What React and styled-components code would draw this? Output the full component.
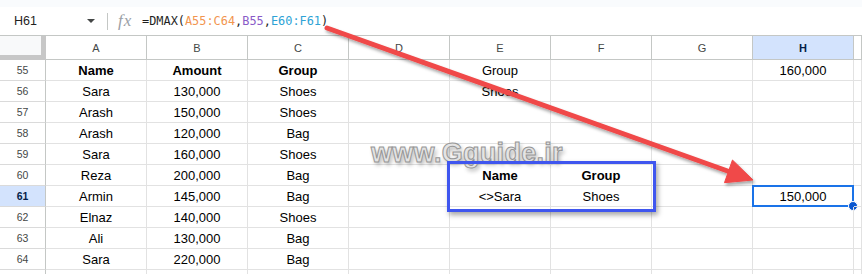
import React from 'react'
import styled, {createGlobalStyle} from 'styled-components'

const GlobalStyle = createGlobalStyle`
  html, body {
    margin: 0;
    padding: 0;
    background: #fff;
    overflow: hidden;
  }
  body {
    font-family: "Liberation Sans", Arial, sans-serif;
  }
`

const Page = styled.div`
  position: relative;
  width: 862px;
  height: 274px;
  overflow: hidden;
  background: #fff;
`

const TopBand = styled.div`
  height: 7px;
  background: #f9fbfd;
`

const FormulaBar = styled.div`
  display: flex;
  align-items: center;
  height: 28px;
  border-bottom: 1px solid #c4c7c5;
`

const NameBox = styled.div`
  display: flex;
  align-items: center;
  justify-content: space-between;
  box-sizing: border-box;
  width: 95px;
  padding-left: 14px;
  font-size: 12.5px;
  color: #1f1f1f;
`

const Caret = styled.span`
  width: 0;
  height: 0;
  border-left: 4px solid transparent;
  border-right: 4px solid transparent;
  border-top: 4px solid #444746;
`

const Divider = styled.span`
  width: 1px;
  height: 17px;
  margin-left: 12px;
  background: #c4c7c5;
`

const Fx = styled.span`
  width: 16px;
  margin-left: 10px;
  font-family: "Liberation Serif", serif;
  font-style: italic;
  font-size: 17px;
  letter-spacing: 1px;
  color: #9aa0a6;
`

const Formula = styled.div`
  margin-left: 8px;
  font-family: "DejaVu Sans Mono", "Liberation Mono", monospace;
  font-size: 11.9px;
  color: #1f1f1f;
`

const Ref = styled.span`
  color: ${p => p.$c};
`

const Sheet = styled.div`
  display: grid;
  grid-template-columns: 46px repeat(8, 101px) 1fr;
  grid-template-rows: 24px;
  grid-auto-rows: 21px;
`

const Corner = styled.div`
  box-sizing: border-box;
  background: #f8f9fa;
  border-right: 5px solid #c7c7c7;
  border-bottom: 5px solid #c7c7c7;
`

const ColHead = styled.div`
  box-sizing: border-box;
  display: flex;
  align-items: center;
  justify-content: center;
  border-right: 1px solid #c4c7c5;
  border-bottom: 1px solid #c4c7c5;
  background: ${p => (p.$active ? '#d3e3fd' : '#fff')};
  color: ${p => (p.$active ? '#041e49' : '#444746')};
  font-weight: ${p => (p.$active ? 700 : 400)};
  font-size: 11px;
`

const RowHead = styled.div`
  box-sizing: border-box;
  display: flex;
  align-items: center;
  justify-content: center;
  border-right: 1px solid #c4c7c5;
  border-bottom: 1px solid #dadada;
  background: ${p => (p.$active ? '#d3e3fd' : '#fff')};
  color: ${p => (p.$active ? '#041e49' : '#444746')};
  font-weight: ${p => (p.$active ? 700 : 400)};
  font-size: 10.5px;
`

const Cell = styled.div`
  position: relative;
  box-sizing: border-box;
  border-right: 1px solid #e2e2e2;
  border-bottom: 1px solid #e2e2e2;
  padding-top: 1px;
  line-height: 19px;
  text-align: center;
  white-space: nowrap;
  font-size: 13px;
  font-weight: ${p => (p.$bold ? 700 : 400)};
  color: #000;
`

const Selection = styled.div`
  position: absolute;
  top: -1px;
  left: -1px;
  width: 102px;
  height: 22px;
  box-sizing: border-box;
  border: 2px solid #1a73e8;
`

const Handle = styled.span`
  position: absolute;
  right: -6px;
  bottom: -6px;
  width: 8px;
  height: 8px;
  border-radius: 50%;
  background: #0b57d0;
  border: 1px solid #fff;
`

const HighlightBox = styled.div`
  position: absolute;
  left: 447px;
  top: 161px;
  width: 209px;
  height: 51px;
  box-sizing: border-box;
  border: 3px solid #3f56ef;
  box-shadow: 2px 3px 5px rgba(0, 0, 0, 0.35);
`

const Watermark = styled.div`
  position: absolute;
  left: 371px;
  top: 138px;
  font-size: 27px;
  font-weight: 700;
  letter-spacing: 0.3px;
  color: #e4e4e4;
  -webkit-text-stroke: 1px #969696;
  text-shadow: 2px 3px 4px rgba(0, 0, 0, 0.3);
`

const ArrowLayer = styled.svg`
  position: absolute;
  left: 0;
  top: 0;
  pointer-events: none;
`

const cols = ['A', 'B', 'C', 'D', 'E', 'F', 'G', 'H', '']

const b = t => ({t, b: true})

// last row only peeks in at the bottom edge, so no label shows
const rows = [
  [55, b('Name'), b('Amount'), b('Group'), '', 'Group', '', '', '160,000', ''],
  [56, 'Sara', '130,000', 'Shoes', '', 'Shoes', '', '', '', ''],
  [57, 'Arash', '150,000', 'Shoes', '', '', '', '', '', ''],
  [58, 'Arash', '120,000', 'Bag', '', '', '', '', '', ''],
  [59, 'Sara', '160,000', 'Shoes', '', '', '', '', '', ''],
  [60, 'Reza', '200,000', 'Bag', '', b('Name'), b('Group'), '', '', ''],
  [61, 'Armin', '145,000', 'Bag', '', '<>Sara', 'Shoes', '', '150,000', ''],
  [62, 'Elnaz', '140,000', 'Shoes', '', '', '', '', '', ''],
  [63, 'Ali', '130,000', 'Bag', '', '', '', '', '', ''],
  [64, 'Sara', '220,000', 'Bag', '', '', '', '', '', ''],
  ['', '', '', '', '', '', '', '', '', ''],
]

function Arrow() {
  const tip = [753, 180]
  const ux = 0.943, uy = 0.333
  const len = 26, half = 12
  const bx = tip[0] - ux * len, by = tip[1] - uy * len
  const p1 = [bx + uy * half, by - ux * half]
  const p2 = [bx - uy * half, by + ux * half]
  return (
    <ArrowLayer width="862" height="274" viewBox="0 0 862 274">
      <defs>
        <filter id="sh" x="-10%" y="-10%" width="120%" height="130%">
          <feDropShadow dx="1.5" dy="2.5" stdDeviation="1.8" floodColor="#000" floodOpacity="0.35" />
        </filter>
      </defs>
      <g filter="url(#sh)" fill="#f04848" stroke="#f04848">
        <line x1="327" y1="28" x2={bx + ux * 2} y2={by + uy * 2} strokeWidth="5" strokeLinecap="round" />
        <polygon points={`${tip[0]},${tip[1]} ${p1[0]},${p1[1]} ${p2[0]},${p2[1]}`} strokeWidth="1" strokeLinejoin="round" />
      </g>
    </ArrowLayer>
  )
}

export default function App() {
  return (
    <Page>
      <GlobalStyle />
      <TopBand />
      <FormulaBar>
        <NameBox>
          H61
          <Caret />
        </NameBox>
        <Divider />
        <Fx>fx</Fx>
        <Formula>
          =DMAX(<Ref $c="#f2954f">A55:C64</Ref>,<Ref $c="#8a5bc8">B55</Ref>,<Ref $c="#2ea3d6">E60:F61</Ref>)
        </Formula>
      </FormulaBar>
      <Sheet>
        <Corner />
        {cols.map((c, i) => (
          <ColHead key={i} $active={c === 'H'}>{c}</ColHead>
        ))}
        {rows.map(([n, ...cells], r) => (
          <React.Fragment key={r}>
            <RowHead $active={n === 61}>{n}</RowHead>
            {cells.map((v, i) => {
              const text = typeof v === 'string' ? v : v.t
              const selected = n === 61 && i === 7
              return (
                <Cell key={i} $bold={typeof v !== 'string' && v.b}>
                  {text}
                  {selected && (
                    <Selection>
                      <Handle />
                    </Selection>
                  )}
                </Cell>
              )
            })}
          </React.Fragment>
        ))}
      </Sheet>
      <Watermark>www.Gguide.ir</Watermark>
      <HighlightBox />
      <Arrow />
    </Page>
  )
}
